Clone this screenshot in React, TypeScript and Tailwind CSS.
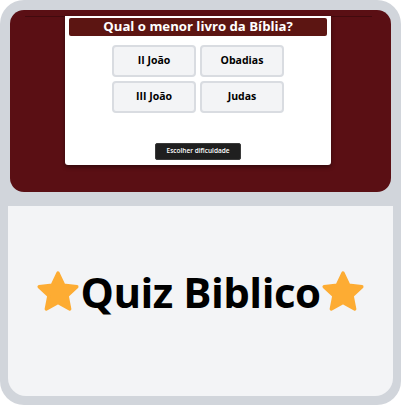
import React from 'react';

function Star({ className }: { className?: string }) {
  return (
    <svg viewBox="0 0 24 24" className={className} aria-hidden="true">
      <path
        d="M12 1.6l3.1 6.6 7.2.9-5.3 5 1.4 7.2L12 17.8l-6.4 3.5 1.4-7.2-5.3-5 7.2-.9z"
        fill="#fdac33"
        stroke="#fdac33"
        strokeWidth="1.8"
        strokeLinejoin="round"
      />
    </svg>
  );
}

export default function App() {
  const answers = ['II João', 'Obadias', 'III João', 'Judas'];

  return (
    <div className="w-[401px] h-[405px] bg-white" style={{ fontFamily: '"Open Sans", "DejaVu Sans", sans-serif' }}>
      <div className="w-full h-full bg-[#d1d5db] rounded-[24px] flex flex-col">
        {/* Preview */}
        <div className="p-[10px] pb-0">
          <div className="h-[182px] bg-[#5a0f14] rounded-[14px] pt-[6px] pl-[15px] pr-[19px]">
            <div className="border-t border-[#420a0e] flex pl-[40px]">
              <div className="-mt-px w-[266px] h-[149px] bg-white rounded-b-[3px] shadow-[0_2px_4px_rgba(0,0,0,0.45)] px-[4px] pt-[2px] flex flex-col items-center">
                <div className="w-full h-[18px] bg-[#5c1512] rounded-[2px] flex items-center justify-center">
                  <span className="text-white text-[13.2px] font-bold leading-none">Qual o menor livro da Bíblia?</span>
                </div>
                <div className="mt-[9px] grid grid-cols-2 gap-[4px]">
                  {answers.map((a) => (
                    <div
                      key={a}
                      className="w-[84px] h-[32px] bg-[#f3f4f6] border-2 border-[#d9dce1] rounded-[4px] flex items-center justify-center text-[10.5px] font-bold text-black"
                    >
                      {a}
                    </div>
                  ))}
                </div>
                <div className="mt-[30px] w-[86px] h-[17px] bg-[#1f1f1f] border border-[#3a3a3a] rounded-[2px] flex items-center justify-center">
                  <span className="text-white text-[6.5px] font-semibold leading-none">Escolher dificuldade</span>
                </div>
              </div>
            </div>
          </div>
        </div>

        {/* Title */}
        <div className="mx-[8px] mt-[14px] h-[190px] bg-[#f3f4f6] rounded-b-[18px] flex items-center justify-center">
          <div className="flex items-center -mt-[18px]">
            <Star className="w-[44px] h-[44px]" />
            <span className="text-[42px] font-bold text-black leading-none tracking-[-0.5px]">Quiz Biblico</span>
            <Star className="w-[44px] h-[44px]" />
          </div>
        </div>
      </div>
    </div>
  );
}
